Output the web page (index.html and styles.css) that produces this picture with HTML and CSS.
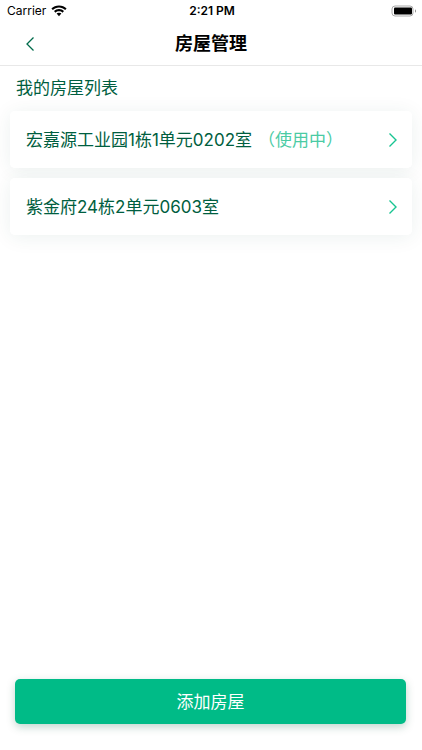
FILE: index.html
```html
<!DOCTYPE html>
<html lang="zh-CN">
<head>
<meta charset="utf-8">
<meta name="viewport" content="width=device-width, initial-scale=1">
<title>房屋管理</title>
<link rel="stylesheet" href="styles.css">
</head>
<body>
<div class="status">
  <div class="carrier">
    <span>Carrier</span>
    <svg class="wifi" viewBox="0 0 16 12" aria-hidden="true"><path d="M8 .4C5 .4 2.300 1.600.4 3.500l1.500 1.600C3.500 3.500 5.600 2.600 8 2.600s4.500.9 6.100 2.500l1.500-1.600C13.700 1.600 11 .4 8 .4Z"/><path d="M8 4.100c-1.900 0-3.700.8-5 2l1.500 1.600C5.400 6.800 6.600 6.300 8 6.300s2.600.5 3.500 1.400L13 6.100c-1.300-1.200-3.100-2-5-2Z"/><path d="M8 7.700c-1 0-1.800.4-2.400.9L8 11.300l2.400-2.700C9.800 8.100 9 7.700 8 7.700Z"/></svg>
  </div>
  <time class="clock">2:21 PM</time>
  <svg class="battery" viewBox="0 0 26 12" aria-hidden="true"><rect class="battery-case" x="1" y="1" width="21" height="10" rx="3"/><rect x="3" y="2.500" width="18" height="7" rx="1"/><path class="battery-tip" d="M24 4.300c1.300.5 1.300 2.900 0 3.400Z"/></svg>
</div>
<header class="nav">
  <button class="back" type="button" aria-label="返回"><svg viewBox="0 0 8 14" aria-hidden="true"><path d="M7.500.5 1 7l6.500 6.500"/></svg></button>
  <h1>房屋管理</h1>
</header>
<main>
  <h2>我的房屋列表</h2>
  <ul class="houses">
    <li><a class="house" href="#house-1"><span>宏嘉源工业园1栋1单元0202室<span class="in-use">（使用中）</span></span><svg viewBox="0 0 8 14" aria-hidden="true"><path d="M.5.5 7 7 .5 13.500"/></svg></a></li>
    <li><a class="house" href="#house-2"><span>紫金府24栋2单元0603室</span><svg viewBox="0 0 8 14" aria-hidden="true"><path d="M.5.5 7 7 .5 13.500"/></svg></a></li>
  </ul>
</main>
<footer>
  <button class="add" type="button">添加房屋</button>
</footer>
</body>
</html>
```
FILE: styles.css
```css
* { box-sizing: border-box; }

body {
  margin: 0;
  min-height: 100vh;
  display: flex;
  flex-direction: column;
  background: #fff;
  color: #005e40;
  font-family: Inter, "Noto Sans CJK SC", sans-serif;
  font-size: 17px;
  line-height: 24px;
}

button { font: inherit; border: 0; cursor: pointer; }

svg { display: block; flex: none; }

.status {
  display: grid;
  grid-template-columns: 1fr auto 1fr;
  align-items: center;
  height: 22px;
  padding: 0 5px 0 7px;
  color: #000;
  font-size: 12px;
  line-height: 22px;
}

.carrier { display: flex; align-items: center; gap: 5px; }
.wifi { width: 16px; height: 12px; }
.clock { font-weight: 600; }
.battery { width: 26px; height: 12px; justify-self: end; }
.battery-case { fill: none; stroke: #aaa; }
.battery-tip { fill: #888; }

.nav {
  display: grid;
  grid-template-columns: 60px 1fr 60px;
  align-items: center;
  height: 44px;
  border-bottom: 1px solid #e8e8e8;
}

.nav h1 {
  margin: 0;
  color: #000;
  font-size: 18px;
  font-weight: 700;
  line-height: 24px;
  text-align: center;
}

.back {
  display: grid;
  place-items: center;
  height: 43px;
  padding: 0;
  background: none;
}

.back svg, .house svg { width: 8px; height: 14px; fill: none; }
.back svg { stroke: #006b4b; stroke-width: 1.3; }
.house svg { stroke: #18c491; stroke-width: 1.4; }

main { flex: 1; padding: 10px; }

h2 {
  margin: 0 6px 11px;
  font-size: 17px;
  font-weight: 400;
  line-height: 24px;
}

.houses {
  display: flex;
  flex-direction: column;
  gap: 10px;
  margin: 0;
  padding: 0;
  list-style: none;
}

.houses li {
  border-radius: 5px;
  box-shadow: 0 2px 20px rgba(0, 80, 60, 0.08);
}

.house {
  position: relative;
  display: flex;
  align-items: center;
  justify-content: space-between;
  min-height: 57px;
  padding: 0 15px 0 16px;
  border-radius: 5px;
  background: #fff;
  color: inherit;
  text-decoration: none;
}

.in-use { margin-left: 6px; color: #4acba4; }

footer { padding: 0 16px 26px 15px; }

.add {
  display: block;
  width: 100%;
  height: 45px;
  border-radius: 5px;
  background: #00bb87;
  box-shadow: 0 3px 8px rgba(0, 90, 60, 0.25);
  color: #fff;
}
```
